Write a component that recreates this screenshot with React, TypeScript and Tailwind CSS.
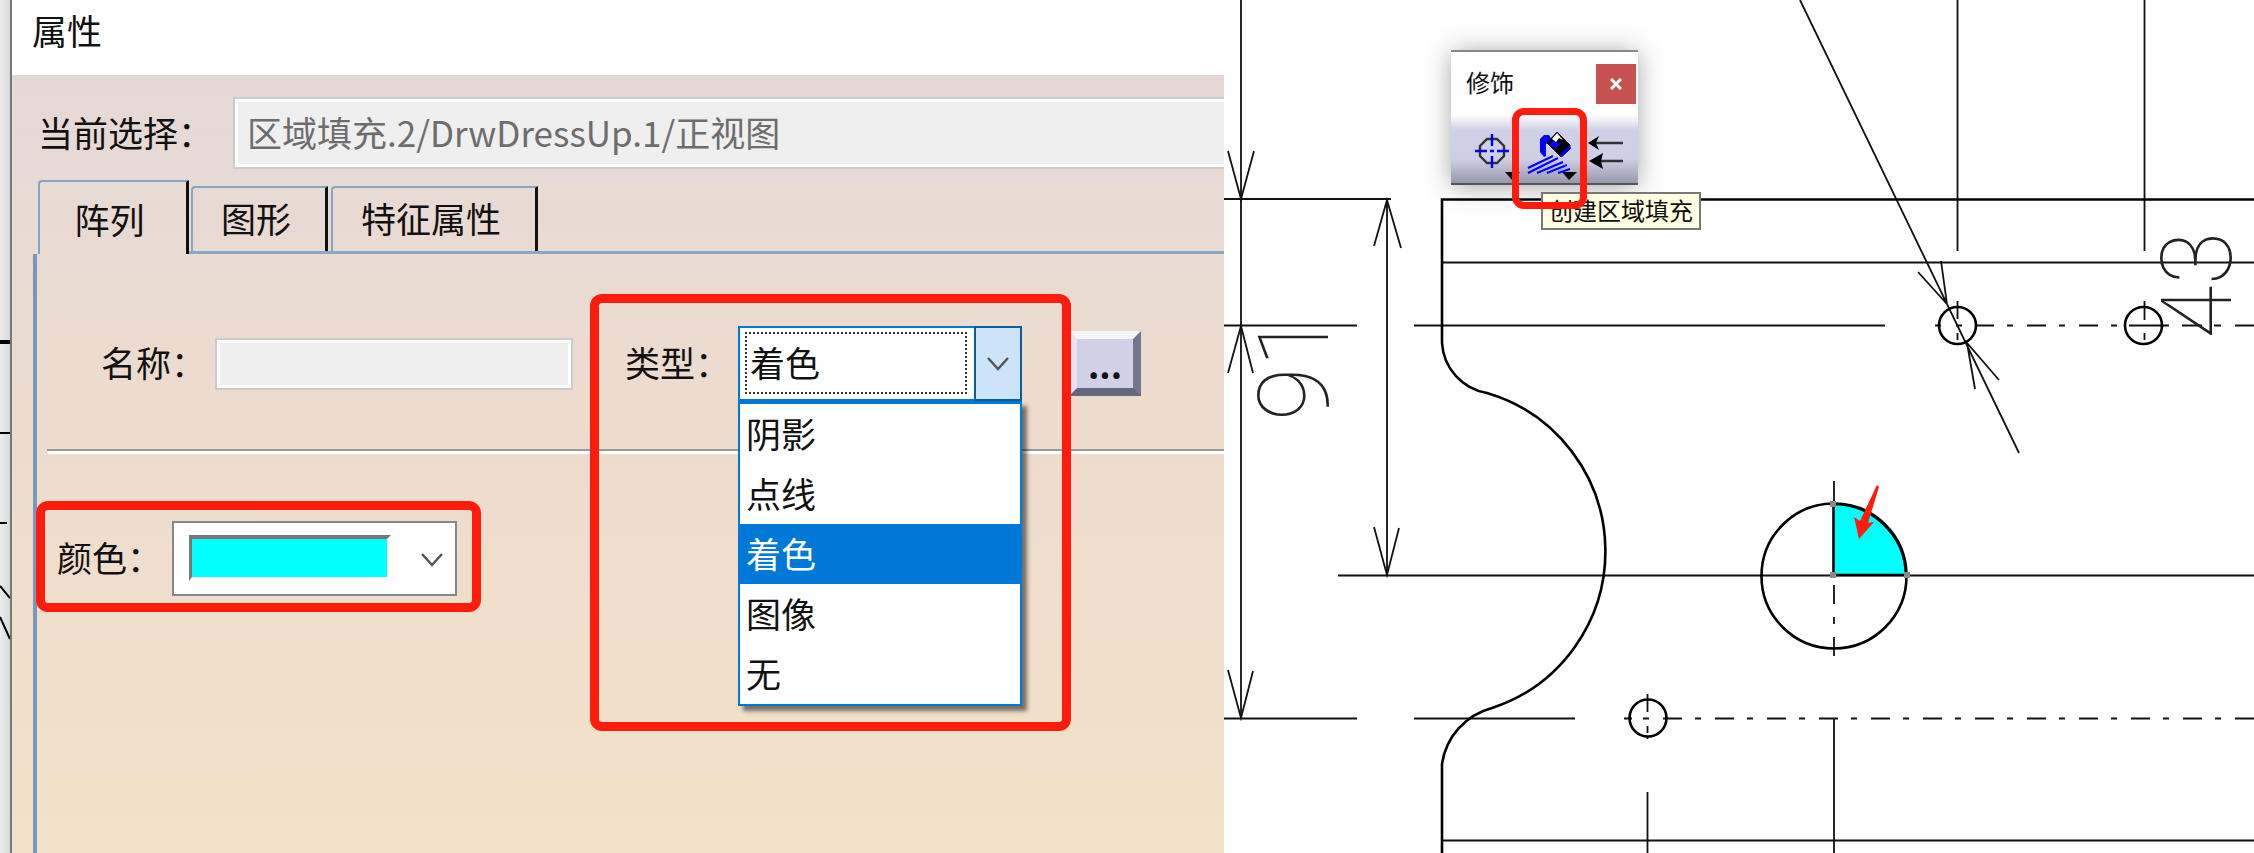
import React, { useState } from "react";

const tabs = ["阵列", "图形", "特征属性"];
const fillTypes = ["阴影", "点线", "着色", "图像", "无"];

const Chevron = ({ className }: { className: string }) => (
  <svg viewBox="0 0 24 14" className={`w-6 h-[14px] pointer-events-none absolute ${className}`} fill="none" stroke="#555" strokeWidth="2.5">
    <path d="M2 1l10 11L22 1" />
  </svg>
);

const Highlight = ({ className }: { className: string }) => (
  <div className={`absolute pointer-events-none border-[#ff1c0c] rounded-xl ${className}`} />
);

// Sliver of the drawing window that shows behind the dialog
const BackWindow = () => (
  <div className="relative w-3 shrink-0 bg-linear-to-r from-[#ececec] to-[#dadada] border-r-2 border-[#777]">
    <svg className="absolute inset-0 w-full h-full" viewBox="0 0 10 853" preserveAspectRatio="none" stroke="#000" fill="none">
      <path d="M0 342h10" strokeWidth="4" />
      <path d="M0 433h10M0 523h7M0 586l10 12M0 617l10 22" strokeWidth="2" />
    </svg>
  </div>
);

const PropertiesDialog = () => {
  const [activeTab, setActiveTab] = useState("阵列");
  const [fillType, setFillType] = useState("着色");

  return (
    <section className="flex min-w-0 overflow-hidden">
      <BackWindow />
      <div className="flex-1 min-w-0 flex flex-col text-[35px] leading-10 text-[#111]">
        <header className="h-[75px] bg-white px-5 flex items-center pb-4">
          <h1>属性</h1>
        </header>

        <div className="flex-1 flex flex-col bg-linear-to-b from-[#e5d9d7] via-[#eddccd] via-45% to-[#f2e2c9] pt-[22px]">
          <div className="flex items-center pl-[26px]">
            <label htmlFor="selection" className="w-[195px] pb-[3px] shrink-0">
              当前选择：
            </label>
            <input
              id="selection"
              disabled
              defaultValue="区域填充.2/DrwDressUp.1/正视图"
              className="flex-1 min-w-0 h-[72px] pl-3 pb-[3px] bg-[#efefef] text-[#6d6d6d] border-2 border-r-0 border-[#ccc] shadow-[inset_3px_0_#fff,inset_0_3px_#fff,inset_0_-3px_#fff]"
            />
          </div>

          <div role="tablist" className="flex h-[74px] mt-[11px] pl-[26px]">
            <button
              role="tab"
              aria-selected={activeTab === tabs[0]}
              onClick={() => setActiveTab(tabs[0])}
              className="w-[151px] pt-[2px] pr-[7px] rounded-tl-sm border-l-2 border-t-2 border-r-3 border-l-[#86a5c6] border-t-[#86a5c6] border-r-[#111]"
            >
              {tabs[0]}
            </button>
            <div className="flex-1 flex items-end gap-[3px] pl-[2px] border-b-3 border-[#8ba8c6]">
              {tabs.slice(1).map((tab) => (
                <button
                  key={tab}
                  role="tab"
                  aria-selected={activeTab === tab}
                  onClick={() => setActiveTab(tab)}
                  className="h-[65px] pl-7 pr-[34px] pb-[3px] rounded-tl-sm border-l-2 border-t-2 border-r-3 border-l-[#86a5c6] border-t-[#86a5c6] border-r-[#111]"
                >
                  {tab}
                </button>
              ))}
            </div>
          </div>

          <div className="flex-1 ml-[21px] border-l-4 border-[#7599bf] pt-[72px]">
            <div className="flex items-center pl-16">
              <label htmlFor="name" className="w-[114px] pb-[3px] shrink-0">
                名称：
              </label>
              <input
                id="name"
                disabled
                className="w-[358px] h-[52px] bg-[#efefef] border-2 border-[#ccc] shadow-[inset_0_0_0_3px_#fff]"
              />
              <div className="relative z-10 flex items-center ml-[52px]">
                <label htmlFor="type" className="w-[113px] pb-[3px] shrink-0">
                  类型：
                </label>
                <div className="relative w-[284px]">
                  <select
                    id="type"
                    value={fillType}
                    onChange={(e) => setFillType(e.target.value)}
                    className="block w-full h-[75px] pl-[10px] pb-[3px] appearance-none bg-white border-2 border-[#0078d7] outline-none"
                  >
                    {fillTypes.map((t) => (
                      <option key={t}>{t}</option>
                    ))}
                  </select>
                  <div className="absolute left-[7px] top-[6px] w-[222px] h-[62px] border-2 border-dotted border-[#333] pointer-events-none" />
                  <div className="absolute right-0 top-0 w-12 h-[75px] bg-[#cce4f7] border-2 border-[#0a5c9f] pointer-events-none" />
                  <Chevron className="right-3 top-[31px]" />
                  <ul
                    role="listbox"
                    aria-label="类型"
                    className="absolute top-full inset-x-0 bg-white border-2 border-t-3 border-[#0078d7] shadow-[5px_5px_4px_rgba(0,0,0,0.5)]"
                  >
                    {fillTypes.map((t) => (
                      <li
                        key={t}
                        role="option"
                        aria-selected={t === fillType}
                        onClick={() => setFillType(t)}
                        className={`h-[60px] pl-[6px] pb-[2px] flex items-center ${t === fillType ? "bg-[#0078d7] text-white" : ""}`}
                      >
                        {t}
                      </li>
                    ))}
                  </ul>
                </div>
                <Highlight className="-left-[35px] -top-8 w-[481px] h-[437px] border-9" />
              </div>
              <button
                aria-label="更多"
                className="ml-[47px] w-[72px] h-[65px] shrink-0 bg-[#d0d0e6] border-8 border-t-[#f4f4fc] border-l-[#e4e4f2] border-r-[#74748e] border-b-[#666680] font-bold leading-none"
              >
                ...
              </button>
            </div>

            <hr className="ml-[10px] mt-12 h-[5px] border-t-2 border-[#999] bg-white" />

            <div className="relative flex items-center w-max mt-[67px] pl-5">
              <label htmlFor="color" className="w-[115px] pb-[3px] shrink-0">
                颜色：
              </label>
              <div className="relative w-[285px]">
                <select id="color" className="block w-full h-[75px] appearance-none bg-white border-2 border-[#888] text-transparent">
                  <option value="#00ffff" />
                </select>
                <div className="absolute left-[17px] top-[14px] w-[202px] h-[46px] bg-[#00ffff] border-l-3 border-t-4 border-r-4 border-b-4 border-l-[#777] border-t-[#777] border-r-white border-b-white pointer-events-none" />
                <Chevron className="right-[13px] top-[32px]" />
              </div>
              <Highlight className="-left-px -top-5 w-[445px] h-[111px] border-9" />
            </div>
          </div>
        </div>
      </div>
    </section>
  );
};

const Drawing = () => (
  <svg
    className="absolute inset-0 w-full h-full"
    viewBox="1224 0 1030 853"
    preserveAspectRatio="xMinYMin slice"
    fill="none"
    stroke="#111"
    strokeWidth="1.8"
  >
    {/* dimension lines */}
    <path d="M1241 0V718M1387 199V575M1224 199H1391M1224 325.5H1357M1414 325.5H1885M1338 575.5H2254M1224 718.5H1357M1414 718.5H1575" />
    <path d="M1228 151L1241 199L1254 151M1228 373L1241 326L1253 373M1228 670L1241 718L1253 671M1374 246L1387 200L1401 248M1374 527L1387 575L1399 528" />
    <path d="M1442 262.5H2254M1442 840.5H2254M1647.5 792V853M1834 719V853M1957.5 0V251M2144.5 0V251" />
    <path d="M1800 0L2019 453M1918 272L1947 304L1941 261M1999 380L1967 343L1975 389" />

    {/* centre lines */}
    <path d="M1624 718.5h8M1643 718.5h6M1647.5 694v18M1647.5 726v7M1647.5 736v3" />
    <path d="M1663 718.5H2254" strokeDasharray="19 13 6 14" />
    <path d="M1935 325.5h6M1956 325.5h6M1957.5 301v18M1957.5 333v7M2144.5 301v19M2144.5 333v7" />
    <path d="M1975 325.5H2120" strokeDasharray="19 13 6 14" />
    <path d="M2129 325.5h40M2182 325.5h20M2214 325.5h7M2235 325.5h19" />
    <path d="M1834 481v23M1834 585v19M1834 617v7M1834 637v19" />

    {/* part outline */}
    <g stroke="#000" strokeWidth="2.6">
      <path d="M2254 199.5H1442V343A54 54 0 0 0 1487 393A165 165 0 0 1 1492 708A68 68 0 0 0 1442 764V853" />
      <circle cx="1957.5" cy="325.5" r="18.5" />
      <circle cx="2143.5" cy="325.5" r="18.5" />
      <circle cx="1648" cy="718" r="18.5" />
      <path d="M1833.5 504A72.5 72.5 0 0 1 1906 575H1833.5Z" fill="#00ffff" />
      <circle cx="1834" cy="576" r="72.5" />
    </g>
    <path d="M1830 501h6v6h-6zM1830 572h6v6h-6zM1904 572h6v6h-6z" fill="#8a8a8a" stroke="none" />
    <path d="M1876 487L1877 485L1879 487L1868 523L1874 522L1859 539L1854 517L1860 521Z" fill="#ff1c0c" stroke="none" />

    <g fill="#222" stroke="none" fontSize="98" fontWeight="100" fontFamily="Roboto, sans-serif">
      <text transform="translate(1328 421) rotate(-90)">91</text>
      <text transform="translate(2231 339) rotate(-90)">43</text>
    </g>
  </svg>
);

const DressUpToolbar = () => (
  <div className="absolute left-[227px] top-[50px] w-[187px] border-t-2 border-b-2 border-t-[#888] border-b-[#555] bg-white shadow-[0_2px_24px_rgba(0,0,0,0.35)]">
    <div className="h-[63px] pl-[15px] pr-[2px] flex items-center justify-between">
      <span className="text-2xl text-[#111] pb-1">修饰</span>
      <button aria-label="关闭" className="size-10 bg-[#c75050] flex items-center justify-center">
        <svg viewBox="0 0 12 12" className="size-3" stroke="#fff" strokeWidth="3">
          <path d="M1 1l10 10M11 1L1 11" />
        </svg>
      </button>
    </div>
    <div className="h-[68px] pl-3 flex bg-[linear-gradient(#fff,#d0d0e6_22%,#cecee4_65%,#9898ac)]">
      <button aria-label="中心线">
        <svg viewBox="0 0 58 68" className="w-[58px] h-[68px]" fill="none">
          <path d="M24 24h10l7 7v10l-7 7H24l-7-7V31z" stroke="#333" strokeWidth="2.4" />
          <path d="M29 19v12M29 41v12M12 36h12M34 36h12M27 36h4" stroke="#0000ff" strokeWidth="2.4" />
          <path d="M42 57h15l-8 8z" fill="#000" />
        </svg>
      </button>
      <button aria-label="创建区域填充">
        <svg viewBox="0 0 58 68" className="w-[58px] h-[68px]" fill="none">
          <path d="M7 53l25-12M7 58l30-15M16 58l26-11M26 58l20-8M37 58l12-4" stroke="#0000ff" strokeWidth="2" />
          <path d="M28 20h-5l-4 4v13l4 5 2-1v-12l6-4z" fill="#0000ff" />
          <path d="M36 17l13 13v4l-9 8-14-14z" fill="#000" stroke="#111" />
          <path d="M36 18l6 7-4-2-3 4-4-3z" fill="#fff" />
          <path d="M28 29l4-3 4 2 4-1-6 7z" fill="#0000ff" />
          <path d="M49 32l-9 9" stroke="#0000ff" strokeWidth="3" />
          <path d="M41 57h15l-8 8z" fill="#000" />
        </svg>
      </button>
      <button aria-label="箭头">
        <svg viewBox="0 0 58 68" className="w-[58px] h-[68px]" fill="none">
          <path d="M12 28h32M14 46h30" stroke="#333" strokeWidth="2.4" />
          <path d="M9 28l11-7-3 7 3 7zM10 46l14-8-2 8 2 8z" fill="#000" />
        </svg>
      </button>
    </div>
  </div>
);

const DrawingView = () => (
  <section className="relative min-w-0 overflow-hidden bg-white">
    <Drawing />
    <DressUpToolbar />
    <div
      role="tooltip"
      className="absolute left-[317px] top-[192px] h-[38px] px-[6px] pb-[2px] flex items-center bg-[#ffffe1] border-2 border-[#777] text-2xl text-[#111]"
    >
      创建区域填充
    </div>
    <Highlight className="left-[288px] top-[108px] w-[75px] h-[101px] border-[7px]" />
  </section>
);

const App = () => {
  return (
    <main className="grid grid-cols-[1224fr_1030fr] min-h-screen bg-white font-['Noto_Sans_CJK_SC',sans-serif]">
      <PropertiesDialog />
      <DrawingView />
    </main>
  );
};

export default App;
